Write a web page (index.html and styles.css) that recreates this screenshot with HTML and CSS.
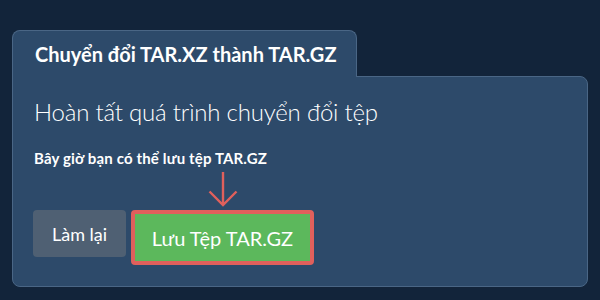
FILE: index.html
```html
<!DOCTYPE html>
<html lang="vi">

<head>
  <meta charset="UTF-8">
  <meta name="viewport" content="width=device-width, initial-scale=1.0">
  <title>Chuyển đổi TAR.XZ thành TAR.GZ</title>
  <link rel="stylesheet" href="styles.css">
</head>

<body>
  <!-- khung chuyển đổi -->
  <div class="converter">
    <div class="tab">Chuyển đổi TAR.XZ thành TAR.GZ</div>
    <div class="panel">
      <h1>Hoàn tất quá trình chuyển đổi tệp</h1>
      <p class="note">Bây giờ bạn có thể lưu tệp TAR.GZ</p>
      <div class="actions">
        <button class="btn btn-reset">Làm lại</button>
        <div class="save-wrap">
          <svg class="arrow" width="30" height="40" viewBox="0 0 30 40">
            <path d="M15 2 V35 M1.5 21.5 L15 35 L28.5 21.5" fill="none" stroke="#e0605c" stroke-width="2.4"/>
          </svg>
          <button class="btn btn-save">Lưu Tệp TAR.GZ</button>
        </div>
      </div>
    </div>
  </div>
</body>

</html>
```

FILE: styles.css
```css
* {
  margin: 0;
  padding: 0;
  box-sizing: border-box;
}

body {
  background-color: #12243a;
  font-family: Lato, "Noto Sans", sans-serif;
  color: #fff;
  padding: 30px 12px 0 12px;
}

/* tab phía trên */
.converter {
  display: flex;
  flex-direction: column;
  align-items: flex-start;
}

.tab {
  width: 345px;
  height: 47px;
  padding: 11px 0 0 22px;
  background-color: #2d4a6a;
  border: 1px solid #4a6685;
  border-bottom: none;
  border-radius: 8px 8px 0 0;
  font-size: 20px;
  font-weight: 700;
  line-height: 24px;
  position: relative;
  z-index: 1;
}

/* nội dung chính */
.panel {
  width: 100%;
  height: 211px;
  margin-top: -1px;
  padding: 21px 20px 0 21px;
  background-color: #2d4a6a;
  border: 1px solid #4a6685;
  border-radius: 0 8px 8px 8px;
}

.panel h1 {
  font-size: 24px;
  font-weight: 300;
  line-height: 28px;
  letter-spacing: -0.2px;
}

.note {
  margin-top: 23px;
  font-size: 15px;
  font-weight: 700;
  line-height: 18px;
  letter-spacing: 0.15px;
}

.actions {
  display: flex;
  align-items: flex-start;
  gap: 5px;
  margin-top: 3px;
  margin-left: -1px;
}

.save-wrap {
  display: flex;
  flex-direction: column;
  align-items: center;
}

.arrow {
  display: block;
}

.btn {
  border: none;
  border-radius: 4px;
  font-family: Lato, "Noto Sans", sans-serif;
  color: #fff;
}

.btn-reset {
  margin-top: 40px;
  width: 93px;
  height: 47px;
  font-size: 18px;
  background-color: #4f6073;
}

.btn-save {
  width: 183px;
  height: 55px;
  font-size: 20px;
  background-color: #5cb85c;
  border: 4px solid #e0605c;
}
```
